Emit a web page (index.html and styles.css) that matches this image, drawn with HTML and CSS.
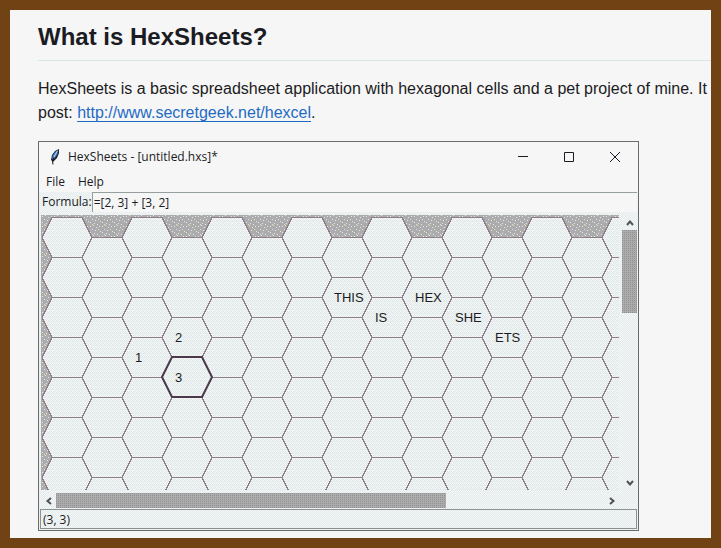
FILE: index.html
```html
<!DOCTYPE html>
<html lang="en">
<head>
<meta charset="utf-8">
<meta name="viewport" content="width=device-width, initial-scale=1">
<title>HexSheets</title>
<link rel="stylesheet" href="styles.css">
</head>
<body>
<main class="page">
  <h2 class="heading">What is HexSheets?</h2>
  <p class="intro">HexSheets is a basic spreadsheet application with hexagonal cells and a pet project of mine. It<br>post: <a href="http://www.secretgeek.net/hexcel">http://www.secretgeek.net/hexcel</a>.</p>

  <section class="window" aria-label="HexSheets window">
    <header class="titlebar">
      <svg class="feather" viewBox="0 0 10 16" aria-hidden="true">
        <path d="M9 0 5 2 2 6 1 11 3 13 7 9 9 4Z" fill="#1d1d2b"/>
        <path d="M8 1 5 3 2.500 7 2 10.500 4.500 9.500 7.500 5Z" fill="#3f7fd0"/>
        <path d="M7.500 2 5 6 3.500 9" fill="none" stroke="#b8d5f0"/>
        <path d="M4 8 2.500 12 3 15.500" fill="none" stroke="#1d1d2b"/>
      </svg>
      <span class="title">HexSheets - [untitled.hxs]*</span>
      <button class="control" aria-label="Minimize"><svg viewBox="0 0 12 12"><path d="M1 5.500H11"/></svg></button>
      <button class="control" aria-label="Maximize"><svg viewBox="0 0 12 12"><path d="M1.500 1.500H10.500V10.500H1.500Z"/></svg></button>
      <button class="control" aria-label="Close"><svg viewBox="0 0 12 12"><path d="M1 1 11 11M11 1 1 11"/></svg></button>
    </header>
    <nav class="menubar">
      <button>File</button>
      <button>Help</button>
    </nav>
    <div class="formula">
      <label for="formula">Formula:</label>
      <input id="formula" type="text" value="=[2, 3] + [3, 2]">
    </div>
    <div class="sheet">
      <svg class="grid" role="img" aria-label="Hexagonal cells">
        <defs>
          <pattern id="light" width="4" height="4" patternUnits="userSpaceOnUse">
            <rect width="4" height="4" fill="#f3f5f5"/>
            <path d="M0 0h1v1H0zM2 0h1v1H2zM1 1h1v1H1zM3 1h1v1H3zM0 2h1v1H0zM2 2h2v1H2zM1 3h1v1H1z" fill="#e0eaea"/>
          </pattern>
          <pattern id="dark" width="12" height="10" patternUnits="userSpaceOnUse">
            <rect width="12" height="10" fill="#acacac"/>
            <path d="M1 1h1v1H1zM4 0h1v1H4zM7 2h1v1H7zM10 1h1v1h-1zM3 4h1v1H3zM6 5h1v1H6zM11 6h1v1h-1zM1 7h1v1H1zM5 8h1v1H5zM8 9h1v1H8z" fill="#dfe9e9"/>
            <path d="M9 4h1v1H9zM3 9h1v1H3z" fill="#f6dca0"/>
            <path d="M5 3h1v1H5zM8 7h1v1H8zM0 4h1v1H0z" fill="#b2a4d2"/>
          </pattern>
          <pattern id="hexes" x="1" y="2" width="80" height="40" patternUnits="userSpaceOnUse">
            <path d="M0 20.500 10 .5H40L50 20.500H80M0 20.500 10 40.500M50 20.500 40 40.500" fill="none" stroke="#8f7d8a" shape-rendering="crispEdges"/>
          </pattern>
        </defs>
        <rect width="100%" height="100%" fill="url(#dark)"/>
        <path fill="url(#light)" d="M11 2h30l10 20h30l10-20h30l10 20h30l10-20h30l10 20h30l10-20h30l10 20h30l10-20h30l10 20h30l10-20h30l10 20h30l10-20h30l10 20h30l10-20h30l10 20h30l10-20V282H11l-10-20 10-20-10-20 10-20-10-20 10-20-10-20 10-20-10-20 10-20-10-20 10-20-10-20Z"/>
        <rect x="1" y="2" width="100%" height="100%" fill="url(#hexes)"/>
        <path class="selected" d="M121 162 131 142H161L171 162 161 182H131Z"/>
        <g class="values">
          <text x="94" y="147">1</text>
          <text x="134" y="127">2</text>
          <text x="134" y="167">3</text>
          <text x="293" y="87">THIS</text>
          <text x="334" y="107">IS</text>
          <text x="374" y="87">HEX</text>
          <text x="414" y="107">SHE</text>
          <text x="454" y="127">ETS</text>
        </g>
      </svg>
      <div class="scroll vertical">
        <button aria-label="Scroll up"><svg viewBox="0 0 8 8"><path d="M1 6 4 2.500 7 6"/></svg></button>
        <div class="thumb"></div>
        <button aria-label="Scroll down"><svg viewBox="0 0 8 8"><path d="M1 2 4 5.500 7 2"/></svg></button>
      </div>
      <div class="scroll horizontal">
        <button aria-label="Scroll left"><svg viewBox="0 0 8 8"><path d="M6 1 2.500 4 6 7"/></svg></button>
        <div class="thumb"></div>
        <button aria-label="Scroll right"><svg viewBox="0 0 8 8"><path d="M2 1 5.500 4 2 7"/></svg></button>
      </div>
    </div>
    <footer class="status">(3, 3)</footer>
  </section>
</main>
</body>
</html>
```
FILE: styles.css
```css
* { box-sizing: border-box; }

body {
  margin: 0;
  overflow: hidden;
  background: #f6f6f6;
  color: #1b1b23;
  font: 16px/24px "Liberation Sans", Arial, sans-serif;
}

.page {
  min-height: 100vh;
  padding: 10px 0 7px 28px;
  border: 10px solid #704214;
}

.heading {
  margin: 0 0 16px;
  padding-bottom: 6px;
  border-bottom: 1px solid #d8e6e3;
  font-size: 24px;
  line-height: 34px;
}

.intro {
  margin: 0 0 16px;
  white-space: nowrap;
}

.intro a {
  color: #1f6bc4;
  text-underline-offset: 3px;
}

.window {
  max-width: 601px;
  border: 1px solid #686c6c;
  background: conic-gradient(#f6f6f6 25%, #e3ecec 0 50%, #f6f6f6 0 75%, #e3ecec 0) 0 0 / 2px 2px;
  font: 12px/16px "Open Sans", "Noto Sans", sans-serif;
}

button {
  display: flex;
  align-items: center;
  justify-content: center;
  padding: 0;
  border: 0;
  background: none;
  color: inherit;
  font: inherit;
}

button svg {
  fill: none;
  stroke: currentColor;
}

.titlebar {
  display: flex;
  align-items: center;
  height: 30px;
  padding-left: 11px;
  background: #f6f6f6;
}

.feather {
  width: 10px;
  height: 16px;
}

.title {
  flex: 1;
  padding-left: 8px;
}

.control {
  width: 46px;
  height: 30px;
}

.control svg {
  width: 12px;
  height: 12px;
}

.menubar {
  display: flex;
  gap: 13px;
  height: 20px;
  padding-left: 7px;
  background: #f6f6f6;
}

.formula {
  display: flex;
  height: 23px;
  padding: 0 1px 3px 3px;
}

.formula label {
  line-height: 20px;
}

.formula input {
  flex: 1;
  min-width: 0;
  padding: 0 1px;
  border: solid #95a09e;
  border-width: 1px 0 0 1px;
  border-radius: 0;
  background: #f6f6f6;
  color: inherit;
  font: inherit;
}

.sheet {
  display: grid;
  grid-template-columns: 1fr 15px;
  grid-template-rows: 275px 15px;
  gap: 3px;
  padding: 0 1px 1px 2px;
}

.grid {
  width: 100%;
  height: 100%;
}

.selected {
  fill: none;
  stroke: #4b3b4d;
  stroke-width: 2;
}

.values {
  fill: #1b1b23;
  font: 13px "Liberation Sans", Arial, sans-serif;
}

.scroll {
  display: flex;
  color: #505356;
}

.scroll svg {
  width: 8px;
  height: 8px;
  stroke-width: 2;
}

.scroll button {
  flex: none;
  width: 15px;
  height: 15px;
}

.thumb {
  background: conic-gradient(#acacac 75%, #919191 0) 0 0 / 2px 2px;
}

.vertical {
  flex-direction: column;
}

.vertical .thumb {
  height: 30%;
}

.horizontal .thumb {
  width: 67.5%;
}

.scroll button:last-child {
  margin: auto 0 0 auto;
}

.status {
  height: 20px;
  margin: 0 1px 1px;
  padding-left: 2px;
  border: 1px solid #8c9292;
  line-height: 20px;
}
```
